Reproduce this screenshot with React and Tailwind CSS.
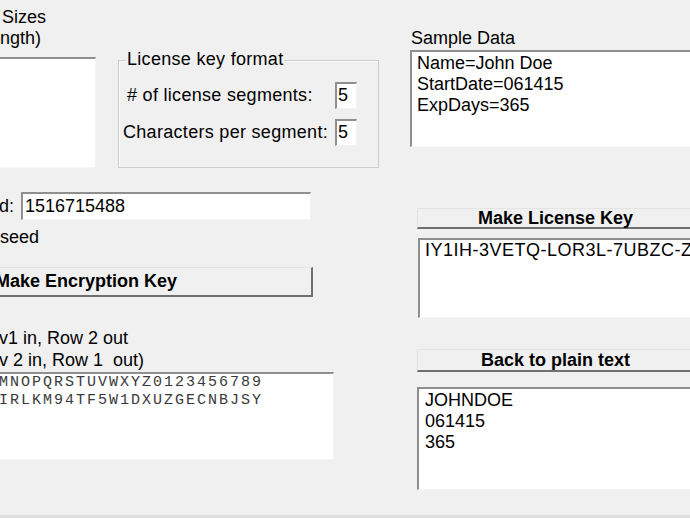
import React from 'react';

const font = { fontFamily: '"Liberation Sans", Arial, sans-serif' };

// sunken edit box, classic Windows look
const sunken =
  'bg-white border-t-2 border-l-2 border-b border-r border-t-[#8f8f8f] border-l-[#8f8f8f] border-b-[#f4f4f4] border-r-[#f4f4f4]';

// raised push button
const raised =
  'bg-[#f0f0f0] border-t border-l border-b-2 border-r-2 border-t-[#e4e4e4] border-l-[#e4e4e4] border-b-[#6f6f6f] border-r-[#6f6f6f] font-bold flex items-center justify-center';

const SmallBox = ({ value }) => (
  <div className={`${sunken} w-[22px] h-[27px] pl-[1px] leading-[23px]`}>{value}</div>
);

const App = () => {
  return (
    <div
      className="w-[690px] h-[518px] overflow-hidden bg-[#f0f0f0] text-black text-[18px] flex flex-col"
      style={font}
    >
      <div className="h-[515px] flex">
        {/* left side of the form */}
        <div className="w-[380px] shrink-0 flex flex-col">
          <div className="flex items-start h-[168px]">
            <div className="w-[96px] shrink-0 flex flex-col">
              <div className="pt-[7px] leading-[21px] whitespace-nowrap">
                <div className="pl-[2px]">Sizes</div>
                <div>ngth)</div>
              </div>
              <div className={`${sunken} mt-[8px] h-[111px] ml-[-10px] w-[106px]`} />
            </div>

            <div className="relative ml-[22px] mt-[60px] w-[261px] h-[108px] border border-[#cdcdcd] shadow-[inset_1px_1px_0_#fafafa] tracking-[0.3px]">
              <span className="absolute left-[7px] top-[-12px] px-[1px] bg-[#f0f0f0] leading-[21px] whitespace-nowrap">
                License key format
              </span>
              <div className="flex items-center mt-[21px] h-[27px] pl-[8px]">
                <div className="w-[208px] whitespace-nowrap">
                  # of license segments:
                </div>
                <SmallBox value="5" />
              </div>
              <div className="flex items-center mt-[10px] h-[27px] pl-[4px]">
                <div className="w-[212px] whitespace-nowrap">
                  Characters per segment:
                </div>
                <SmallBox value="5" />
              </div>
            </div>
          </div>

          <div className="flex items-center mt-[24px] h-[28px]">
            <div className="w-[22px] ml-[-1px] shrink-0">d:</div>
            <div className={`${sunken} w-[290px] h-[28px] pl-[2px] leading-[24px]`}>
              1516715488
            </div>
          </div>
          <div className="mt-[7px] leading-[21px] whitespace-nowrap">seed</div>

          <button
            className={`${raised} mt-[19px] h-[30px] ml-[-140px] w-[453px] shrink-0`}
          >
            Make Encryption Key
          </button>

          <div className="mt-[30px] leading-[22px] whitespace-nowrap ml-[-1px]">
            <div>v1 in, Row 2 out</div>
            <div>v 2 in, Row 1&nbsp; out)</div>
          </div>

          <div
            className={`${sunken} mt-[1px] h-[88px] ml-[-140px] w-[474px] shrink-0 pl-[137px] text-[15px] leading-[18px] tracking-[2px] text-[#3a3a3a]`}
            style={{ fontFamily: '"Liberation Mono", "Courier New", monospace' }}
          >
            <div>MNOPQRSTUVWXYZ0123456789</div>
            <div>IRLKM94TF5W1DXUZGECNBJSY</div>
          </div>
        </div>

        {/* right side of the form */}
        <div className="ml-[30px] w-[300px] shrink-0 flex flex-col">
          <div className="pt-[28px] pl-[1px] leading-[21px]">Sample Data</div>
          <div className={`${sunken} mt-[1px] h-[97px] pl-[5px] pt-[1px] leading-[21px]`}>
            <div>Name=John Doe</div>
            <div>StartDate=061415</div>
            <div>ExpDays=365</div>
          </div>

          <button className={`${raised} mt-[61px] ml-[7px] w-[278px] h-[21px] shrink-0`}>
            Make License Key
          </button>

          <div className={`${sunken} mt-[9px] ml-[8px] h-[80px] pl-[5px] leading-[21px] whitespace-nowrap tracking-[0.5px]`}>
            IY1IH-3VETQ-LOR3L-7UBZC-ZI
          </div>

          <button className={`${raised} mt-[31px] ml-[7px] w-[278px] h-[23px] shrink-0`}>
            Back to plain text
          </button>

          <div className={`${sunken} mt-[15px] ml-[7px] h-[103px] pl-[6px] pt-[1px] leading-[21px]`}>
            <div>JOHNDOE</div>
            <div>061415</div>
            <div>365</div>
          </div>
        </div>
      </div>
      <div className="h-[3px] bg-[#dedede]" />
    </div>
  );
};

export default App;
